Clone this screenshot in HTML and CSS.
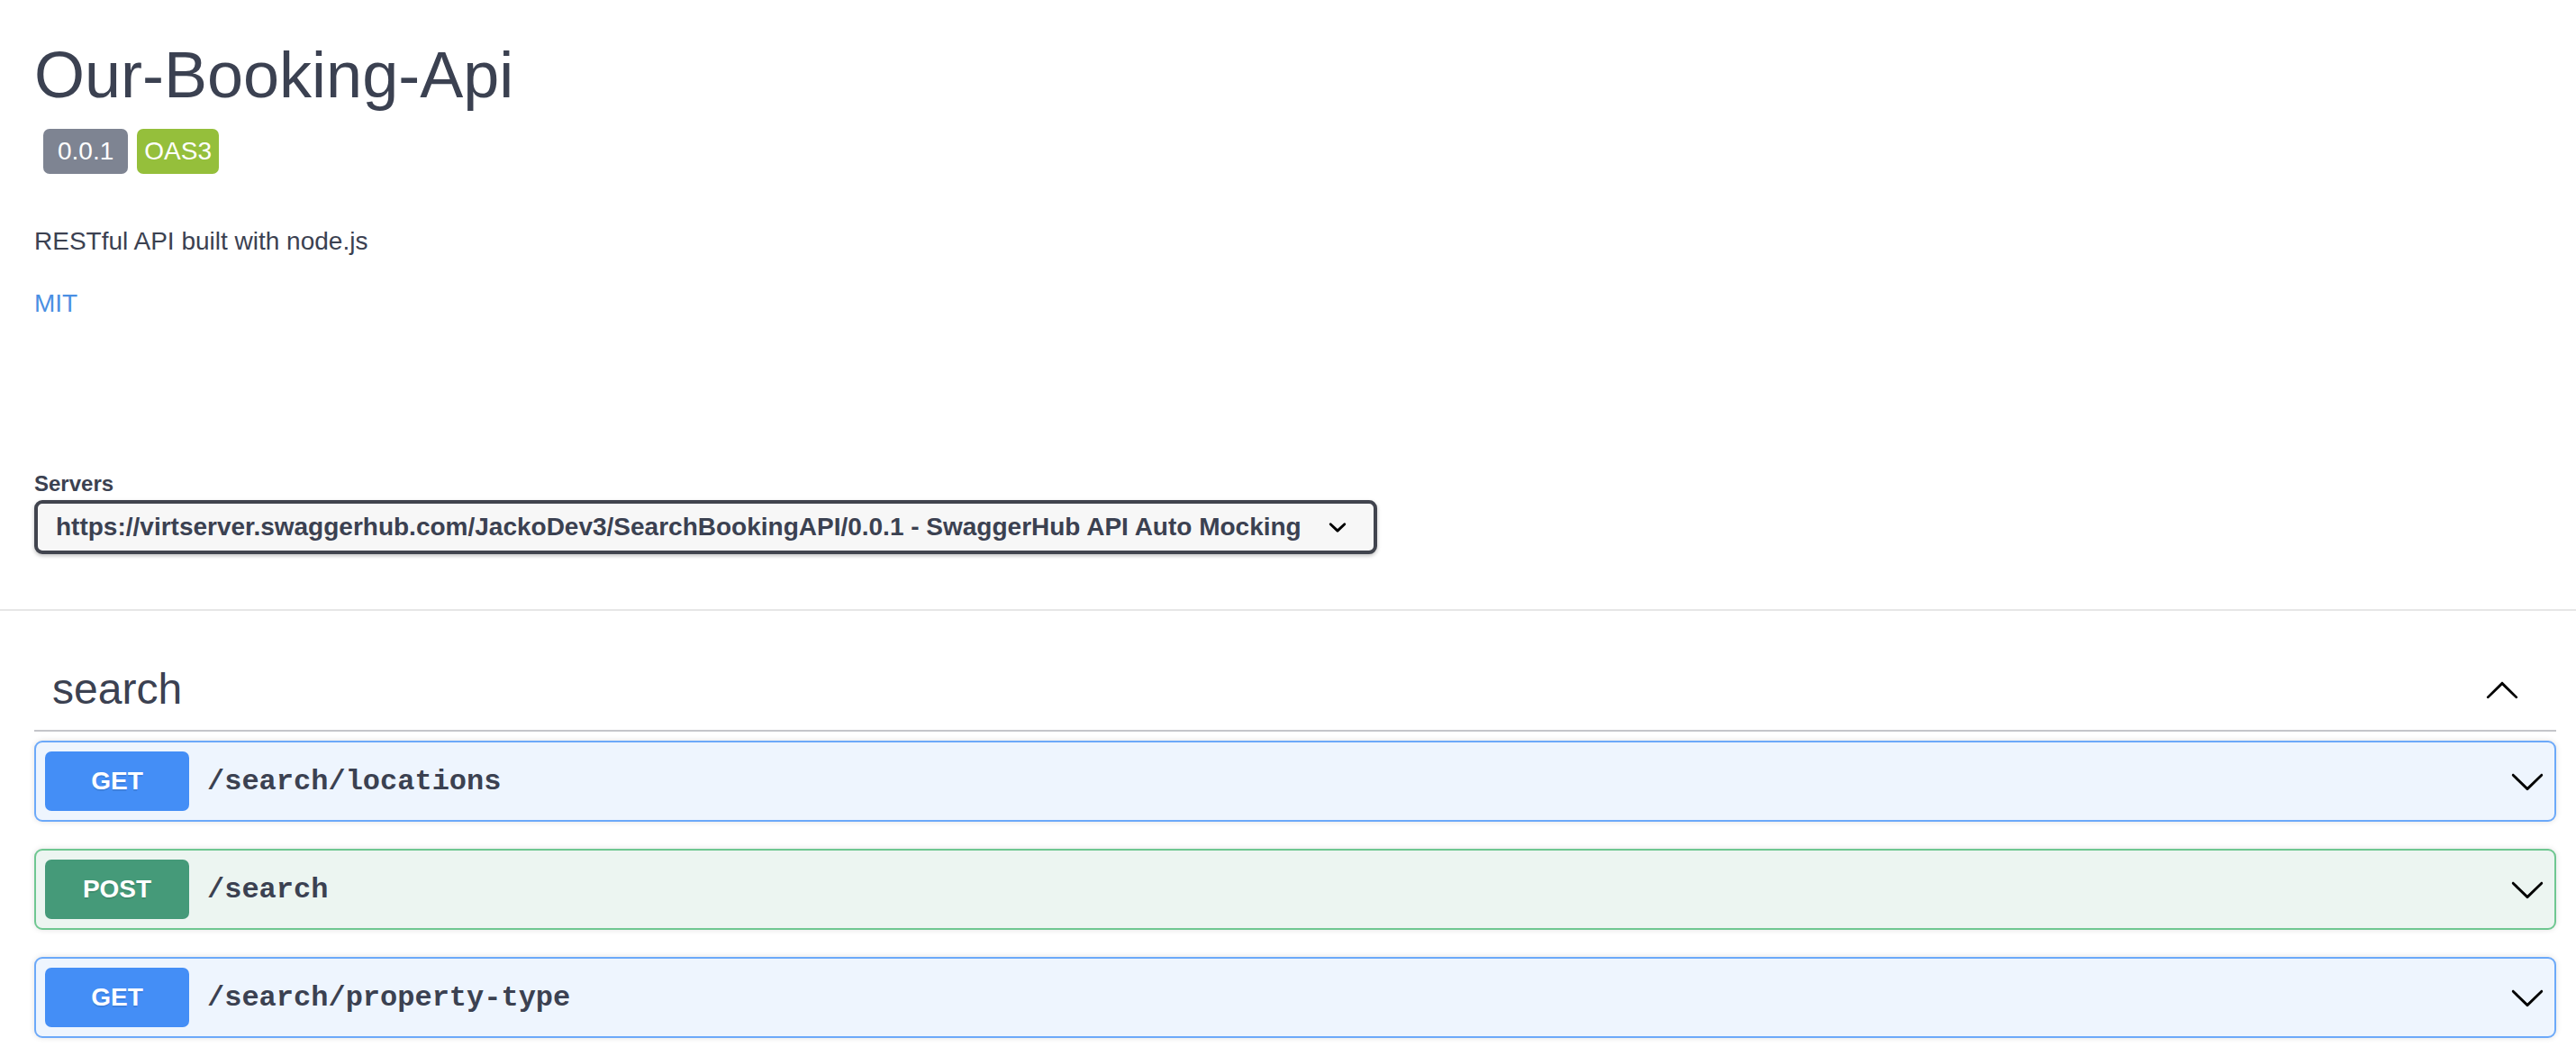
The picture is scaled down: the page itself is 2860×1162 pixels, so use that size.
FILE: index.html
```html
<!DOCTYPE html>
<html lang="en">
<head>
<meta charset="utf-8">
<title>Our-Booking-Api</title>
<link rel="stylesheet" href="styles.css">
</head>
<body>
<div class="wrapper info">
  <h1 class="title">Our-Booking-Api</h1>
  <div class="badges">
    <span class="badge version">0.0.1</span>
    <span class="badge oas">OAS3</span>
  </div>
  <p class="desc">RESTful API built with node.js</p>
  <p class="license"><a href="#">MIT</a></p>
</div>

<section class="scheme">
  <div class="wrapper">
    <div class="servers-title">Servers</div>
    <div class="select" role="combobox">
      <span class="select-text">https://virtserver.swaggerhub.com/JackoDev3/SearchBookingAPI/0.0.1 - SwaggerHub API Auto Mocking</span>
      <svg class="select-arrow" width="40" height="40" viewBox="0 0 20 20" aria-hidden="true"><path d="M13.418 7.859a.695.695 0 01.978 0 .68.68 0 010 .969l-3.908 3.83a.697.697 0 01-.979 0l-3.908-3.83a.68.68 0 010-.969.695.695 0 01.978 0L10 11l3.418-3.141z"/></svg>
    </div>
  </div>
</section>

<div class="wrapper ops">
  <div class="tag">
    <h3 class="tag-name">search</h3>
    <svg class="arrow" width="40" height="40" viewBox="0 0 20 20" aria-hidden="true"><path d="M17.418 14.908c.272.268.709.268.979 0s.271-.701 0-.969l-7.908-7.83c-.27-.268-.707-.268-.979 0l-7.908 7.830c-.27.268-.27.701 0 .969.271.268.709.268.979 0L10 7.767l7.418 7.141z"/></svg>
  </div>

  <div class="opblock get">
    <span class="method">GET</span>
    <span class="path">/search/locations</span>
    <svg class="arrow" width="40" height="40" viewBox="0 0 20 20" aria-hidden="true"><path d="M17.418 6.109c.272-.268.709-.268.979 0s.271.701 0 .969l-7.908 7.83c-.27.268-.707.268-.979 0l-7.908-7.83c-.27-.268-.27-.701 0-.969.271-.268.709-.268.979 0L10 13.25l7.418-7.141z"/></svg>
  </div>

  <div class="opblock post">
    <span class="method">POST</span>
    <span class="path">/search</span>
    <svg class="arrow" width="40" height="40" viewBox="0 0 20 20" aria-hidden="true"><path d="M17.418 6.109c.272-.268.709-.268.979 0s.271.701 0 .969l-7.908 7.83c-.27.268-.707.268-.979 0l-7.908-7.830c-.27-.268-.27-.701 0-.969.271-.268.709-.268.979 0L10 13.25l7.418-7.141z"/></svg>
  </div>

  <div class="opblock get">
    <span class="method">GET</span>
    <span class="path">/search/property-type</span>
    <svg class="arrow" width="40" height="40" viewBox="0 0 20 20" aria-hidden="true"><path d="M17.418 6.109c.272-.268.709-.268.979 0s.271.701 0 .969l-7.908 7.83c-.27.268-.707.268-.979 0l-7.908-7.83c-.27-.268-.27-.701 0-.969.271-.268.709-.268.979 0L10 13.25l7.418-7.141z"/></svg>
  </div>
</div>
</body>
</html>
```

FILE: styles.css
```css
html, body {
  margin: 0;
  padding: 0;
  background: #ffffff;
}

body {
  font-family: "Liberation Sans", Helvetica, Arial, sans-serif;
  color: #3b4151;
}

.wrapper {
  padding: 0 22px 0 38px;
}

/* ---------- info ---------- */
.title {
  margin: 43px 0 20px;
  font-size: 72px;
  line-height: 80px;
  font-weight: 400;
  color: #3b4151;
}

.badges {
  display: flex;
  gap: 10px;
  margin-left: 10px;
}

.badge {
  display: inline-block;
  height: 50px;
  line-height: 50px;
  padding: 0 16px;
  border-radius: 7px;
  font-size: 28px;
  color: #ffffff;
}

.version {
  background: #7e8492;
}

.oas {
  background: #95bf3b;
  padding: 0 8px;
}

.desc {
  margin: 55px 0 0;
  font-size: 28px;
  line-height: 40px;
}

.license {
  margin: 29px 0 0;
  font-size: 28px;
  line-height: 40px;
}

.license a {
  color: #4a8fe3;
  text-decoration: none;
}

/* ---------- servers ---------- */
.scheme {
  padding: 164px 0 61px;
  border-bottom: 2px solid #e6e6e6;
}

.servers-title {
  font-size: 24px;
  line-height: 32px;
  font-weight: 700;
  margin-bottom: 2px;
}

.select {
  display: inline-flex;
  align-items: center;
  gap: 20px;
  padding: 10px 20px;
  border: 4px solid #41444e;
  border-radius: 9px;
  background: #f7f7f7;
  box-shadow: 0 2px 4px 0 rgba(0, 0, 0, 0.25);
}

.select-text {
  font-size: 28px;
  line-height: 32px;
  font-weight: 700;
  color: #3b4151;
  white-space: nowrap;
}

.select-arrow {
  margin: -4px 0;
  fill: #000000;
}

/* ---------- operations ---------- */
.ops {
  padding-top: 42px;
}

.tag {
  display: flex;
  align-items: center;
  padding: 20px 40px 20px 20px;
  border-bottom: 2px solid #c4c5ca;
  margin-bottom: 10px;
}

.tag-name {
  flex: 1;
  margin: 0;
  font-size: 48px;
  line-height: 50px;
  font-weight: 400;
  color: #3b4151;
}

.arrow {
  display: block;
  fill: #000000;
}

.opblock {
  display: flex;
  align-items: center;
  padding: 10px;
  border: 2px solid;
  border-radius: 9px;
  margin-bottom: 30px;
  box-shadow: 0 0 6px rgba(0, 0, 0, 0.12);
}

.opblock.get {
  background: #eef5fe;
  border-color: #6ca9f9;
}

.opblock.post {
  background: #ecf5f1;
  border-color: #6fc791;
}

.method {
  width: 160px;
  height: 66px;
  line-height: 66px;
  text-align: center;
  border-radius: 7px;
  font-size: 28px;
  font-weight: 700;
  color: #ffffff;
  text-shadow: 0 2px 0 rgba(0, 0, 0, 0.1);
}

.get .method {
  background: #448ef6;
}

.post .method {
  background: #459a79;
}

.path {
  flex: 1;
  padding: 0 20px;
  font-family: "Liberation Mono", "Courier New", monospace;
  font-size: 32px;
  font-weight: 700;
  color: #3b4151;
}
```
